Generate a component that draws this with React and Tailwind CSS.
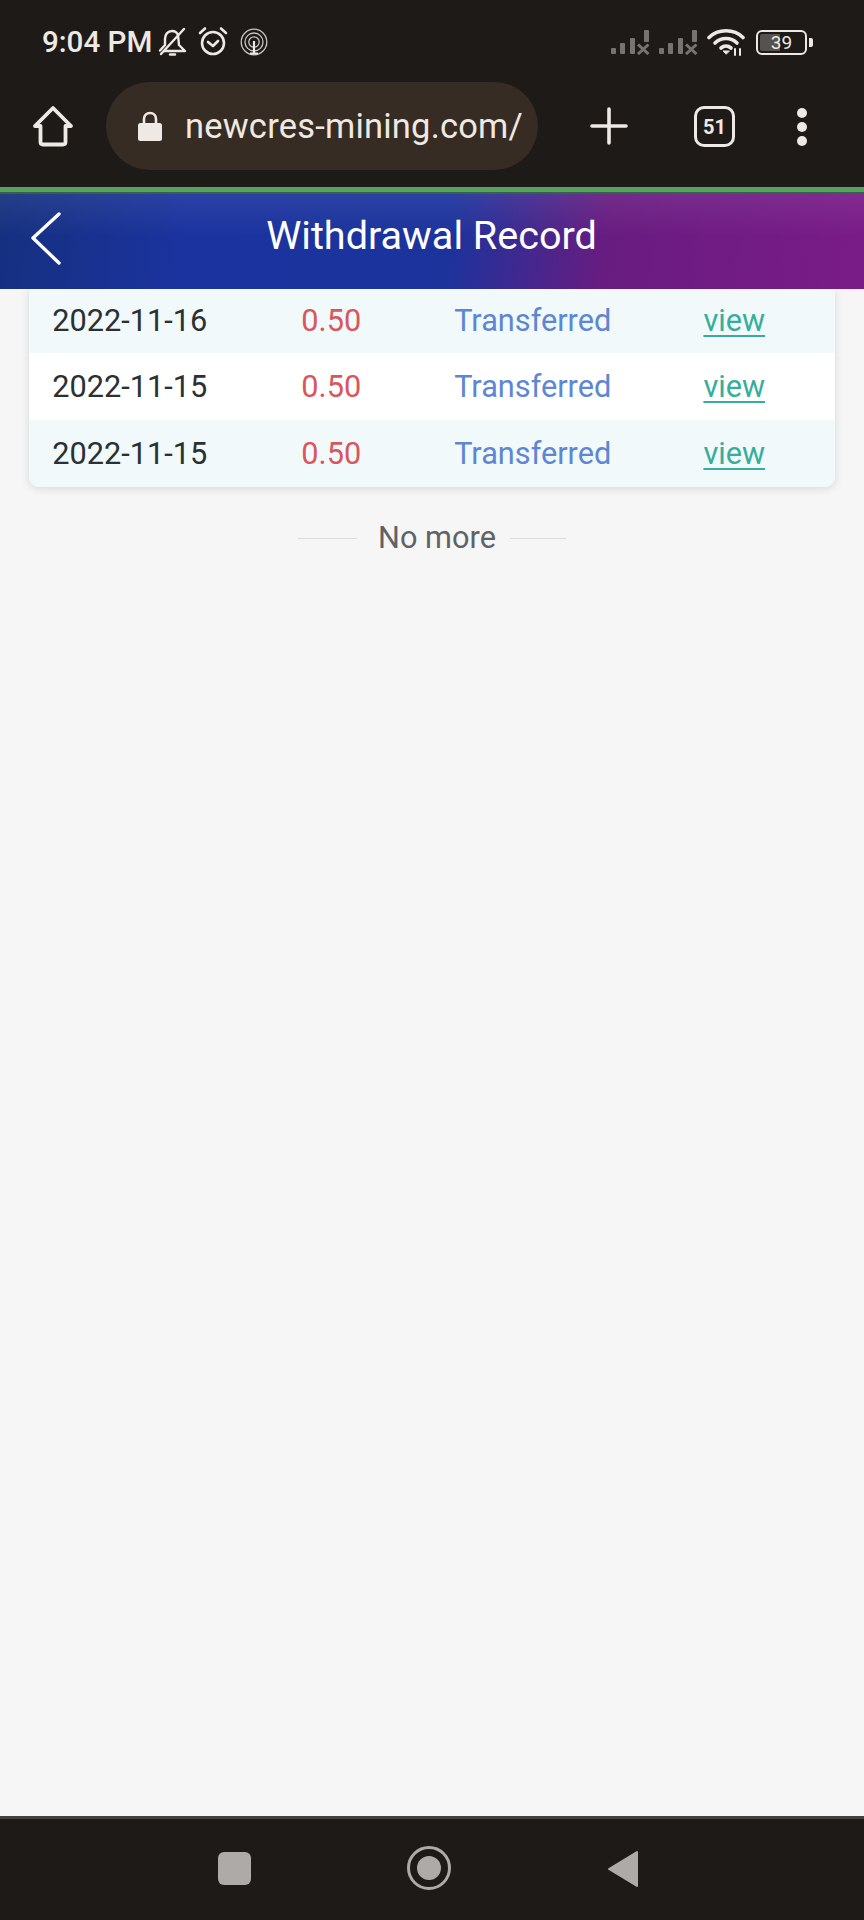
const rows = [
  ["2022-11-16", "bg-[#f1f9fa]", "h-[64px]"],
  ["2022-11-15", "bg-white", "h-[67px]"],
  ["2022-11-15", "bg-[#f1f9fa]", "h-[67px]"],
];

function Signal({ className = "" }) {
  return (
    <svg width="39" height="25" viewBox="0 0 39 25" fill="#77736f" className={className}>
      <rect x="0" y="18" width="5" height="6" rx="1" />
      <rect x="9" y="13" width="5" height="11" rx="1" />
      <rect x="19" y="8" width="5" height="16" rx="1" />
      <rect x="33" y="0" width="5" height="12" rx="1" />
      <path d="M27 14.500 L37.500 24 M37.500 14.500 L27 24" stroke="#77736f" strokeWidth="3" fill="none" />
    </svg>
  );
}

function StatusBar() {
  return (
    <div className="h-[81px] flex items-start justify-between pl-[42px] pr-[51px] pt-[26px]">
      <div className="flex items-center h-[32px] text-[#eee9e4]">
        <span className="text-[29.6px] leading-[32px] font-medium w-[113px] whitespace-nowrap">9:04 PM</span>
        <svg width="30" height="32" viewBox="0 0 30 32" fill="none" stroke="currentColor" strokeWidth="2.400" strokeLinejoin="round" strokeLinecap="round" className="ml-[2px]">
          <path d="M3 24.500 L8 19 V13 C8 8 11 5 15 5 C18 5 20 6.500 21 9 L22 19 L28 25 H7" />
          <path d="M4 28 L27 3" />
          <path d="M13 28.500 H18" />
        </svg>
        <svg width="32" height="32" viewBox="0 0 32 32" fill="none" stroke="currentColor" strokeWidth="2.600" strokeLinecap="round" strokeLinejoin="round" className="ml-[10px]">
          <circle cx="16" cy="17" r="11" />
          <path d="M11 16 L16 20 L21 15" />
          <path d="M3 7 L8 2.500 M29 7 L24 2.500" />
        </svg>
        <svg width="28" height="28" viewBox="0 0 28 28" fill="none" stroke="#c9c5c1" strokeWidth="1.300" className="ml-[11px]">
          <circle cx="14" cy="14" r="12.800" />
          <circle cx="14" cy="14" r="9" />
          <circle cx="14" cy="14" r="5.200" />
          <path d="M14 13 V25 M10 25.500 H18" strokeWidth="2.200" stroke="#eee9e4" />
        </svg>
      </div>
      <div className="flex items-center h-[32px]">
        <Signal />
        <Signal className="ml-[9px]" />
        <svg width="38" height="28" viewBox="0 0 38 28" fill="none" stroke="#eee9e4" strokeWidth="3.600" strokeLinecap="round" className="ml-[9px]">
          <path d="M2 9.500 C11 0.500 27 0.500 36 9.500" />
          <path d="M8 15 C14 9 24 9 30 15" />
          <path d="M14 20 C17 17.500 21 17.500 24 20" />
          <path d="M19 26 L16 23 H22 Z" fill="#eee9e4" strokeWidth="1" />
          <path d="M28 21 V27 M33 21 V27" strokeWidth="2" />
        </svg>
        <div className="ml-[11px] w-[51px] h-[25px] rounded-[6px] border-2 border-[#eee9e4] relative p-[2px]">
          <div className="h-full w-[20px] rounded-l-[2px] bg-[#55524f]" />
          <span className="absolute inset-0 flex items-center justify-center text-[19px] leading-none text-[#eee9e4]">39</span>
        </div>
        <div className="ml-[2px] w-[4px] h-[9px] rounded-r-[2px] bg-[#eee9e4]" />
      </div>
    </div>
  );
}

function Toolbar() {
  return (
    <div className="h-[106px] flex items-start">
      <svg width="42" height="42" viewBox="0 0 42 42" fill="none" stroke="#eee9e4" strokeWidth="3.800" strokeLinejoin="round" strokeLinecap="round" className="ml-[32px] mt-[24px]">
        <path d="M3 21 L21 3 L39 21 H33.500 V37 C33.500 38.500 32.500 39.500 31 39.500 H11 C9.500 39.500 8.500 38.500 8.500 37 V21 Z" />
      </svg>
      <div className="ml-[32px] w-[432px] h-[88px] mt-[1px] rounded-[44px] bg-[#372c23] flex items-center pl-[31px] pr-[15px] text-[#eee9e4] overflow-hidden">
        <svg width="26" height="32" viewBox="0 0 26 32" className="shrink-0">
          <path d="M7 14 V9 C7 5.500 9.500 3 13 3 C16.500 3 19 5.500 19 9 V14" fill="none" stroke="#eee9e4" strokeWidth="2.600" />
          <rect x="1" y="13" width="24" height="18" rx="2.500" fill="#eee9e4" />
        </svg>
        <span className="ml-[22px] text-[34.500px] leading-[40px] tracking-[0.2px] whitespace-nowrap overflow-hidden">newcres-mining.com/</span>
      </div>
      <svg width="38" height="38" viewBox="0 0 38 38" stroke="#eee9e4" strokeWidth="3.600" strokeLinecap="round" className="ml-[52px] mt-[26px]">
        <path d="M19 2 V36 M2 19 H36" />
      </svg>
      <div className="ml-[66px] mt-[25px] w-[41px] h-[41px] rounded-[10px] border-[3.500px] border-[#eee9e4] flex items-center justify-center text-[20px] leading-none font-bold text-[#eee9e4]">51</div>
      <div className="ml-[62px] mt-[27px] flex flex-col gap-[4px]">
        <div className="w-[10px] h-[10px] rounded-full bg-[#eee9e4]" />
        <div className="w-[10px] h-[10px] rounded-full bg-[#eee9e4]" />
        <div className="w-[10px] h-[10px] rounded-full bg-[#eee9e4]" />
      </div>
    </div>
  );
}

export default function App() {
  return (
    <div className="w-[864px] h-[1920px] flex flex-col bg-[#f6f6f6] font-['Roboto',sans-serif] overflow-hidden">
      <div className="bg-[#1e1a17]">
        <StatusBar />
        <Toolbar />
      </div>
      <div className="h-[7px] bg-[#55a35c] border-b-[2px] border-[#36614f]" />
      <div className="h-[95px] flex items-center relative bg-[linear-gradient(180deg,rgba(255,255,255,0.07),rgba(255,255,255,0)_45%),linear-gradient(96deg,#15307f_0%,#1b339f_22%,#1c339c_52%,#681c80_70%,#7a1b88_100%)]">
        <svg width="36" height="56" viewBox="0 0 36 56" fill="none" stroke="#ffffff" strokeWidth="3.400" strokeLinecap="round" strokeLinejoin="round" className="absolute left-[29px] top-[17px]">
          <path d="M30 3 L4 27 L30 52" />
        </svg>
        <div className="w-full text-center pr-[1px] pb-[12px] text-[39.600px] leading-[44px] text-white">Withdrawal Record</div>
      </div>
      <div className="flex-1 flex flex-col">
        <div className="mx-[29px] w-[806px] rounded-b-[10px] overflow-hidden shadow-[0_2px_8px_rgba(0,0,0,0.12)]">
          {rows.map(([date, bg, h], i) => (
            <div key={i} className={`grid grid-cols-4 items-center text-center text-[30.700px] leading-[36px] ${h} ${bg}`}>
              <span className="text-[#2b3033]">{date}</span>
              <span className="text-[#d9565c]">0.50</span>
              <span className="text-[#5d86d4]">Transferred</span>
              <span className="text-[#37ad9b] underline decoration-2 underline-offset-[4px]">view</span>
            </div>
          ))}
        </div>
        <div className="mt-[33px] flex items-center justify-center text-[30.700px] leading-[36px] text-[#606266]">
          <div className="w-[59px] h-[1px] bg-[#dcdcdc]" />
          <span className="ml-[21px] mr-[14px]">No more</span>
          <div className="w-[56px] h-[1px] bg-[#dcdcdc]" />
        </div>
      </div>
      <div className="h-[104px] bg-[#1e1a17] border-t-[3px] border-[#444241] flex items-start">
        <div className="ml-[218px] mt-[33px] w-[33px] h-[33px] rounded-[6px] bg-[#aeaaa8]" />
        <div className="ml-[156px] mt-[27px] w-[44px] h-[44px] rounded-full border-[3.500px] border-[#aeaaa8] flex items-center justify-center">
          <div className="w-[24px] h-[24px] rounded-full bg-[#aeaaa8]" />
        </div>
        <svg width="32" height="38" viewBox="0 0 32 38" className="ml-[156px] mt-[31px]">
          <path d="M2 19 L30 2 V36 Z" fill="#aeaaa8" stroke="#aeaaa8" strokeWidth="2" strokeLinejoin="round" />
        </svg>
      </div>
    </div>
  );
}
